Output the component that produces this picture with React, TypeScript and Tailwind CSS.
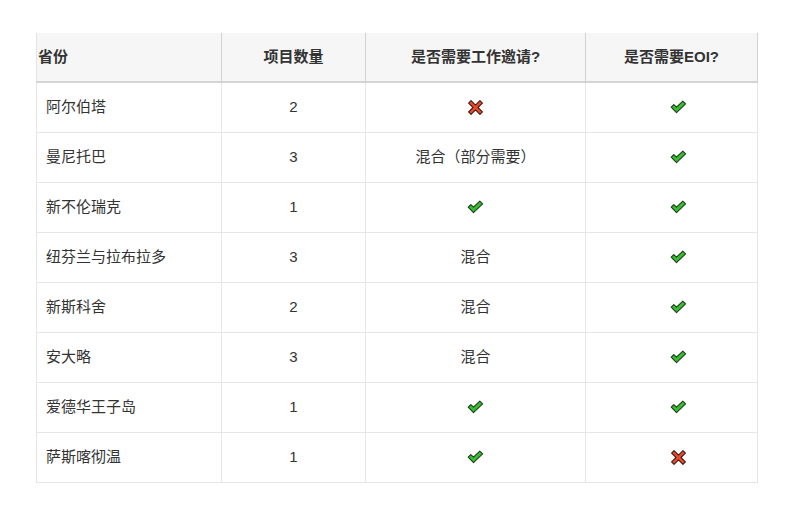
const rows: [string, string, string, string][] = [
  ["阿尔伯塔", "2", "x", "v"],
  ["曼尼托巴", "3", "混合（部分需要）", "v"],
  ["新不伦瑞克", "1", "v", "v"],
  ["纽芬兰与拉布拉多", "3", "混合", "v"],
  ["新斯科舍", "2", "混合", "v"],
  ["安大略", "3", "混合", "v"],
  ["爱德华王子岛", "1", "v", "v"],
  ["萨斯喀彻温", "1", "v", "x"],
];

function Check() {
  return (
    <svg width="17" height="14" viewBox="0 0 17 14" className="block">
      <path
        d="M1.2 7.2 L3.8 4.6 L6.5 7.2 L12.8 1.2 L15.6 3.8 L6.5 12.6 Z"
        fill="#35c02f"
        stroke="#1f3a1c"
        strokeWidth="1.1"
        strokeLinejoin="round"
      />
    </svg>
  );
}

function Cross() {
  return (
    <svg width="17" height="17" viewBox="0 0 16 16" className="block">
      <path
        d="M1.5 3.8 L3.8 1.5 L8 5.7 L12.2 1.5 L14.5 3.8 L10.3 8 L14.5 12.2 L12.2 14.5 L8 10.3 L3.8 14.5 L1.5 12.2 L5.7 8 Z"
        fill="#ee4a2a"
        stroke="#3a1a14"
        strokeWidth="1"
        strokeLinejoin="round"
      />
    </svg>
  );
}

function Cell({ v, shift }: { v: string; shift?: boolean }) {
  if (v === "v" || v === "x")
    return (
      <div className={`flex items-center justify-center ${shift ? "pl-[13px]" : ""}`}>
        {v === "v" ? <Check /> : <Cross />}
      </div>
    );
  return <>{v}</>;
}

export default function App() {
  return (
    <div
      className="w-[794px] h-[516px] bg-white pt-[33px] pl-[36px] text-[15px] text-[#333]"
      style={{ fontFamily: '"Liberation Sans", "Noto Sans CJK SC", sans-serif' }}
    >
      <table className="border-collapse w-[721px] table-fixed">
        <colgroup>
          <col className="w-[185px]" />
          <col className="w-[144px]" />
          <col className="w-[220px]" />
          <col className="w-[172px]" />
        </colgroup>
        <thead>
          <tr className="h-[49px] bg-[#f6f6f6]">
            <th className="text-left font-bold border-l border-l-[#e3e3e3] border-b-2 border-b-[#d4d4d4] px-0 pl-[1px]">
              省份
            </th>
            <th className="text-center font-bold border-l border-[#d2d2d2] border-b-2 border-b-[#d4d4d4]">
              项目数量
            </th>
            <th className="text-center font-bold border-l border-[#d2d2d2] border-b-2 border-b-[#d4d4d4]">
              是否需要工作邀请?
            </th>
            <th className="text-center font-bold border-l border-r border-[#d2d2d2] border-b-2 border-b-[#d4d4d4]">
              是否需要EOI?
            </th>
          </tr>
        </thead>
        <tbody>
          {rows.map((r) => (
            <tr key={r[0]} className="h-[50px]">
              <td className="border border-[#e6e6e6] pl-[9px]">{r[0]}</td>
              <td className="border border-[#e6e6e6] text-center">{r[1]}</td>
              <td className="border border-[#e6e6e6] text-center align-middle">
                <Cell v={r[2]} />
              </td>
              <td className="border border-[#e6e6e6] text-center align-middle">
                <Cell v={r[3]} shift />
              </td>
            </tr>
          ))}
        </tbody>
      </table>
    </div>
  );
}
